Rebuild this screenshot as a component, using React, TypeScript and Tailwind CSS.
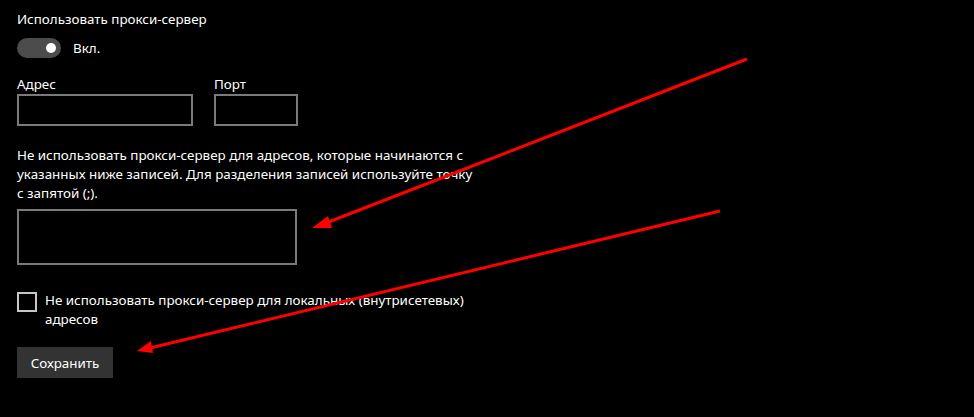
import React from "react";

function Toggle() {
  return (
    <div className="flex h-5 w-11 items-center justify-end rounded-full bg-[#4c4c4c] pr-[5px]">
      <div className="h-[10px] w-[10px] rounded-full bg-white" />
    </div>
  );
}

function Arrows() {
  return (
    <svg
      className="pointer-events-none absolute inset-0"
      width="974"
      height="417"
      viewBox="0 0 974 417"
    >
      <line x1="747" y1="59" x2="326" y2="223" stroke="#ff0000" strokeWidth="3" />
      <polygon points="312,228 328,216 332,228" fill="#ff0000" />
      <line x1="720" y1="211" x2="150" y2="348" stroke="#ff0000" strokeWidth="3" />
      <polygon points="137,351 151,341 153,353" fill="#ff0000" />
    </svg>
  );
}

export default function App() {
  return (
    <div className="relative h-[417px] w-[974px] overflow-hidden bg-black font-['Noto_Sans',sans-serif] text-[13.4px] text-white">
      <div className="flex flex-col px-[17px] pt-[9px]">
        <div className="leading-5">Использовать прокси-сервер</div>
        <div className="mt-[9px] flex items-center gap-3">
          <Toggle />
          <span className="leading-5">Вкл.</span>
        </div>
        <div className="mt-[16px] flex gap-[21px]">
          <div className="flex flex-col">
            <span className="leading-5">Адрес</span>
            <div className="h-8 w-[176px] border-2 border-[#7a7a7a]" />
          </div>
          <div className="flex flex-col">
            <span className="leading-5">Порт</span>
            <div className="h-8 w-[84px] border-2 border-[#7a7a7a]" />
          </div>
        </div>
        <p className="mt-[20px] w-[462px] leading-[19px]">
          Не использовать прокси-сервер для адресов, которые начинаются с указанных
          ниже записей. Для разделения записей используйте точку с запятой (;).
        </p>
        <div className="mt-[6px] h-[56px] w-[280px] border-2 border-[#7a7a7a]" />
        <label className="mt-[26px] flex items-start gap-2">
          <span className="mt-[1px] h-5 w-5 shrink-0 border-2 border-[#c6c6c6]" />
          <span className="w-[440px] leading-[19px]">
            Не использовать прокси-сервер для локальных (внутрисетевых) адресов
          </span>
        </label>
        <button
          type="button"
          className="mt-[18px] h-[31px] w-[96px] bg-[#333333] leading-5 text-white"
        >
          Сохранить
        </button>
      </div>
      <Arrows />
    </div>
  );
}
